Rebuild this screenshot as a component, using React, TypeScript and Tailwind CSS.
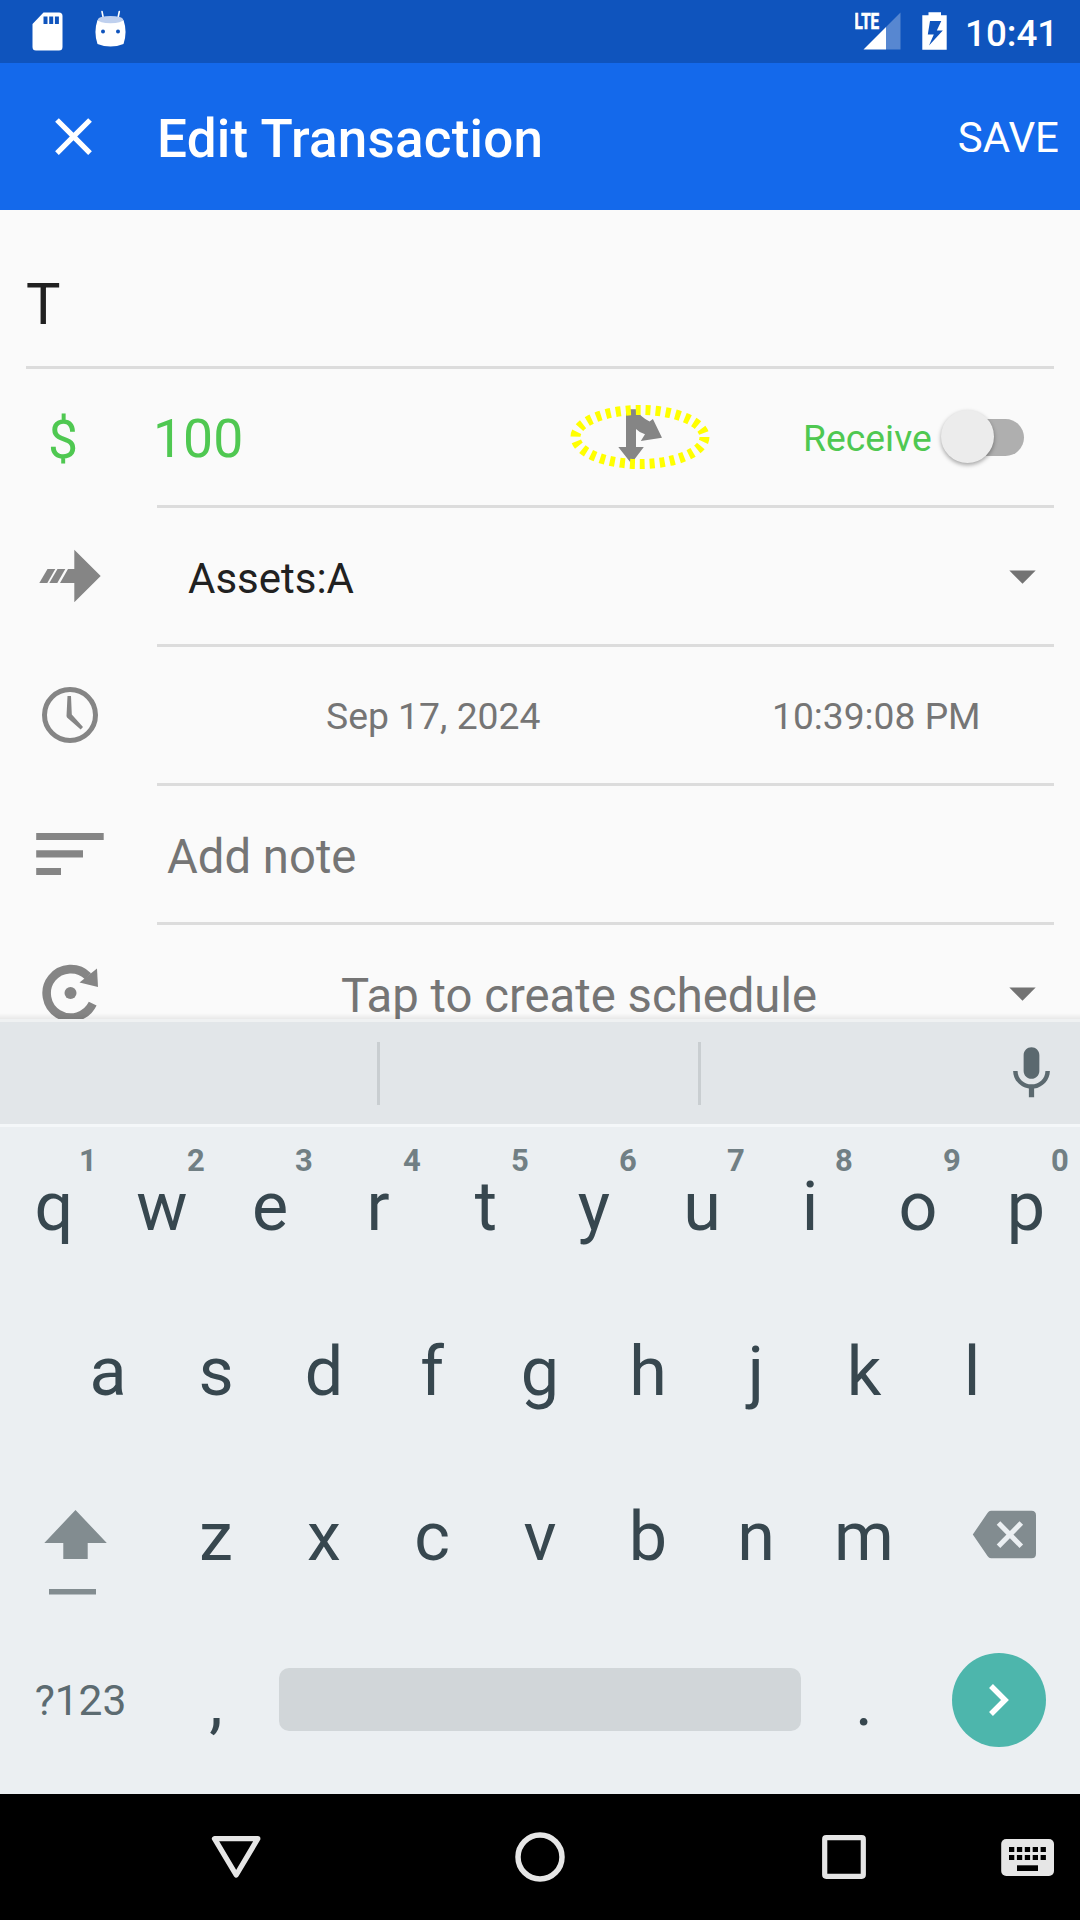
import type { ReactNode } from "react";

function SdCardIcon() {
  return (
    <svg className="ml-[32px] h-[63px] w-[31px]" viewBox="0 0 31 63">
      <path
        fillRule="evenodd"
        fill="#fff"
        d="M11.5 12.5H27a3.5 3.5 0 0 1 3.5 3.5v31a3.5 3.5 0 0 1-3.5 3.5H4A3.5 3.5 0 0 1 .5 47V24zM11.5 16.5v7.5h4v-7.5zM17.2 16.5v7.5h4v-7.5zM22.9 16.5v7.5h4v-7.5z"
      />
    </svg>
  );
}

function DroidIcon() {
  return (
    <svg className="ml-[32px] h-[63px] w-[32px]" viewBox="95 0 32 63">
      <path d="M102 11.5l1.6 8M119.3 11.5l-1.6 8" stroke="#fff" strokeWidth="1.6" strokeLinecap="round" />
      <path fill="#fff" d="M97.5 20Q110.500 25 123.500 20Q127.600 32 123.500 44Q110.500 49 97.500 44Q93.400 32 97.500 20z" />
      <ellipse cx="110.500" cy="19.600" rx="12.700" ry="3.700" fill="#bfd0ee" />
      <circle cx="103" cy="31.500" r="2" fill="#0f54bd" />
      <circle cx="118" cy="31.500" r="2" fill="#0f54bd" />
    </svg>
  );
}

function SignalIcon() {
  return (
    <svg className="h-[63px] w-[46px]" viewBox="855 0 46 63">
      <path fill="#fff" fillOpacity=".3" d="M886 27l14.500-14.500V49.500H886z" />
      <path fill="#fff" d="M863.500 49.500L886 27V49.500z" />
      <text
        x="854.600"
        y="29"
        fill="#fff"
        stroke="#fff"
        strokeWidth=".7"
        fontFamily="Roboto, sans-serif"
        fontWeight="700"
        fontSize="22"
        textLength="24.500"
        lengthAdjust="spacingAndGlyphs"
      >
        LTE
      </text>
    </svg>
  );
}

function BatteryIcon() {
  return (
    <svg className="ml-[21px] h-[63px] w-[25px]" viewBox="922 0 25 63">
      <path
        fill="#fff"
        fillRule="evenodd"
        d="M928.500 12.300h12.500V15.300h5.700V49.700H922.300V15.300h6.200zM930 21l-2.200 13.500h6L929 45.500 942.800 30.500h-6L941.300 21z"
      />
    </svg>
  );
}

function ArrowIcon() {
  return (
    <svg className="h-[136px] w-[157px]" viewBox="0 508 157 136" fill="#858585">
      <path d="M74.300 549.700L100.700 576 74.300 602.300V583H60l8-14h6.300z" />
      <path d="M47.500 569H55.300L47.300 583H39.300z" />
      <path d="M57.500 569H65.300L57.300 583H49.300z" />
    </svg>
  );
}

function ClockIcon() {
  return (
    <svg className="h-[136px] w-[157px]" viewBox="0 647 157 136">
      <circle cx="70" cy="715" r="25.500" fill="none" stroke="#858585" strokeWidth="5" />
      <path fill="#858585" d="M67.500 696H71L71.800 714.500 83 727 80.700 729.500 67 717.500 66.500 716z" />
    </svg>
  );
}

function NotesIcon() {
  return (
    <svg className="h-[136px] w-[157px]" viewBox="0 786 157 136" fill="#858585">
      <path d="M36.200 833H103.700V840H36.200zM36.200 850.300H83V857.600H36.200zM36.200 868H61V875H36.200z" />
    </svg>
  );
}

function RepeatIcon() {
  return (
    <svg className="h-[136px] w-[157px] shrink-0" viewBox="0 925 157 136">
      <path d="M92.700 1003.700A24.200 24.200 0 1 1 88 976.200" fill="none" stroke="#858585" strokeWidth="8.600" />
      <path fill="#858585" d="M97 968.500L98 987 79.500 982.500z" />
      <circle cx="70.500" cy="993" r="6" fill="#858585" />
    </svg>
  );
}

function SplitIcon() {
  return (
    <svg className="h-[136px] w-[140px]" viewBox="569.700 369 140 136">
      <path fill="#858585" d="M625.700 409.300H635.500Q640 417 649.300 421.500L652.600 419 661.700 437.700 640.500 441 644.700 434.300Q639 432.500 635.700 429V447H643.500L631 463.500 618 447H625.700z" />
      <ellipse cx="639.700" cy="437" rx="64.500" ry="27" fill="none" stroke="#ff0" strokeWidth="10" strokeDasharray="5 5" />
    </svg>
  );
}

function Caret() {
  return (
    <svg className="mt-[2px] h-[14px] w-[27px]" viewBox="0 0 27 14">
      <path fill="#737373" d="M.3.500H26.700L13.500 13.700z" />
    </svg>
  );
}

function Row({ icon, children }: { icon: ReactNode; children: ReactNode }) {
  return (
    <div className="flex h-[139px] shrink-0 pr-[26px]">
      <div className="w-[157px] shrink-0">{icon}</div>
      <div className="flex min-w-0 flex-1 items-center border-b-[3px] border-[#dcdcdc]">{children}</div>
    </div>
  );
}

function Key({ label, hint }: { label: string; hint?: string }) {
  return (
    <div className="relative h-[157px] w-[108px] text-center text-[68.25px] leading-[160px] text-[#37474f]">
      {label}
      {hint && (
        <span className="absolute top-[17px] right-[11px] w-[18px] text-center text-[31px] leading-[33px] font-bold text-[#717f84]">
          {hint}
        </span>
      )}
    </div>
  );
}

function ShiftIcon() {
  return (
    <svg className="h-[157px] w-[162px]" viewBox="0 1457 162 157" fill="#828c90">
      <path d="M75.500 1510L106.800 1543H87.700V1559H63.300V1543H44.300z" />
      <path d="M49 1589H96V1594.500H49z" />
    </svg>
  );
}

function BackspaceIcon() {
  return (
    <svg className="h-[157px] w-[162px]" viewBox="918 1457 162 157">
      <path fill="#828c90" d="M991 1510.700H1031.500Q1036 1510.700 1036 1515.200V1553.700Q1036 1558.200 1031.500 1558.200H991Q989 1558.200 987.500 1556L972.800 1534.500 987.500 1513Q989 1510.700 991 1510.700z" />
      <path d="M998.500 1523L1021.300 1546.200M1021.300 1523L998.500 1546.200" stroke="#ebeff2" strokeWidth="5" />
    </svg>
  );
}

const topRow = ["q", "w", "e", "r", "t", "y", "u", "i", "o", "p"];
const homeRow = ["a", "s", "d", "f", "g", "h", "j", "k", "l"];
const bottomRow = ["z", "x", "c", "v", "b", "n", "m"];

function Keyboard() {
  return (
    <div className="flex h-[667px] flex-col gap-2 bg-[#ebeff2]">
      <div className="flex">
        {topRow.map((k, i) => (
          <Key key={k} label={k} hint={String((i + 1) % 10)} />
        ))}
      </div>
      <div className="flex px-[54px]">
        {homeRow.map((k) => (
          <Key key={k} label={k} />
        ))}
      </div>
      <div className="flex">
        <ShiftIcon />
        {bottomRow.map((k) => (
          <Key key={k} label={k} />
        ))}
        <BackspaceIcon />
      </div>
      <div className="flex h-[157px] items-center">
        <div className="w-[162px] pr-[1px] text-center text-[42.5px] leading-[157px] text-[#5c6b71]">?123</div>
        <Key label="," />
        <div className="mx-[9px] mb-[2px] h-[63px] flex-1 rounded-[10px] bg-[#d1d6d9]" />
        <Key label="." />
        <div className="flex w-[162px] justify-center pb-[1px]">
          <div className="flex size-[94.5px] items-center justify-center rounded-full bg-[#4db6ac]">
            <svg className="mr-[1px] h-[32px] w-[20px]" viewBox="0 0 20 32">
              <path d="M2 2L16 16 2 30" fill="none" stroke="#fff" strokeWidth="5.500" />
            </svg>
          </div>
        </div>
      </div>
    </div>
  );
}

function NavBar() {
  return (
    <div className="flex h-[126px] bg-black">
      <svg className="ml-[184px] h-[126px] w-[104px]" viewBox="184 1794 104 126">
        <path d="M214.500 1838.700H257.800L236.200 1875z" fill="none" stroke="#e6e6e6" strokeWidth="5.300" strokeLinejoin="round" />
      </svg>
      <svg className="ml-[200px] h-[126px] w-[104px]" viewBox="488 1794 104 126">
        <circle cx="540" cy="1857" r="22" fill="none" stroke="#e6e6e6" strokeWidth="5.500" />
      </svg>
      <svg className="ml-[200px] h-[126px] w-[104px]" viewBox="792 1794 104 126">
        <rect x="824.700" y="1837.700" width="38.600" height="38.600" rx="1.500" fill="none" stroke="#e6e6e6" strokeWidth="5.200" />
      </svg>
      <svg className="ml-[80px] h-[126px] w-[104px]" viewBox="976 1794 104 126">
        <rect x="1001.200" y="1839" width="52.800" height="37" rx="5" fill="#e6e6e6" />
        <path
          stroke="#000"
          strokeWidth="5"
          strokeDasharray="5.300 2.600"
          d="M1009 1849.600H1046M1009 1857.600H1046"
        />
        <path fill="#000" d="M1017 1865.300H1038V1871H1017z" />
      </svg>
    </div>
  );
}

export default function App() {
  return (
    <div className="flex h-[1920px] w-[1080px] flex-col overflow-hidden bg-[#fafafa] font-[Roboto,sans-serif]">
      <div className="flex h-[63px] shrink-0 bg-[#0f54bd]">
        <SdCardIcon />
        <DroidIcon />
        <div className="ml-auto flex pr-[24px]">
          <SignalIcon />
          <BatteryIcon />
          <span className="ml-[18px] w-[91px] pt-[2px] text-right text-[36.75px] leading-[63px] font-medium whitespace-nowrap text-white">10:41</span>
        </div>
      </div>

      <div className="flex h-[147px] shrink-0 items-center bg-[#1469eb] text-white">
        <svg className="ml-[42px] size-[63px]" viewBox="0 0 24 24" fill="#fff">
          <path d="M19 6.410L17.590 5 12 10.590 6.410 5 5 6.410 10.590 12 5 17.590 6.410 19 12 13.410 17.590 19 19 17.590 13.410 12z" />
        </svg>
        <h1 className="ml-[52px] pt-[4px] text-[53px] leading-[60px] font-medium tracking-[0.2px]">Edit Transaction</h1>
        <span className="mr-[21px] ml-auto pt-[2px] text-[42px] leading-[50px]">SAVE</span>
      </div>

      <div className="flex h-[809px] shrink-0 flex-col overflow-hidden">
        <div className="mx-[26px] flex h-[159px] shrink-0 items-center border-b-[3px] border-[#dcdcdc] pt-[32px] text-[57.75px] leading-[68px] text-[#212121]">
          T
        </div>

        <Row icon={<div className="pt-[3px] pl-[48px] text-[53.5px] leading-[136px] text-[#4fc851]">$</div>}>
          <span className="-ml-[4px] w-[417px] pt-[4px] text-[53.5px] leading-[60px] text-[#4fc851]">100</span>
          <SplitIcon />
          <span className="ml-[93px] pt-[1px] text-[37.3px] leading-[44px] text-[#4fc851]">Receive</span>
          <div className="relative mr-[30px] ml-auto h-[37px] w-[73px] rounded-full bg-[#afafaf]">
            <div className="absolute -top-[9px] -left-[10px] size-[53px] rounded-full bg-[#ececec] shadow-[0_2px_4px_rgba(0,0,0,0.35)]" />
          </div>
        </Row>

        <Row icon={<ArrowIcon />}>
          <span className="flex-1 pt-[5px] pl-[31px] text-[42px] leading-[50px] text-[#212121]">Assets:A</span>
          <div className="mr-[18px]">
            <Caret />
          </div>
        </Row>

        <Row icon={<ClockIcon />}>
          <span className="ml-[169px] w-[446px] pt-[1px] text-[37.3px] leading-[44px] text-[#757575]">Sep 17, 2024</span>
          <span className="pt-[1px] text-[37.2px] leading-[44px] text-[#757575]">10:39:08 PM</span>
        </Row>

        <Row icon={<NotesIcon />}>
          <span className="pt-[5px] pl-[10px] text-[47.25px] leading-[56px] text-[#757575]">Add note</span>
        </Row>

        <Row icon={<RepeatIcon />}>
          <span className="flex-1 pt-[5px] pr-[8px] text-center text-[47.25px] leading-[56px] text-[#757575]">Tap to create schedule</span>
          <div className="mr-[18px]">
            <Caret />
          </div>
        </Row>
      </div>

      <div className="relative h-[3px] shrink-0 bg-[#eff1f2]">
        <div className="absolute -top-[6px] left-0 h-[6px] w-full bg-linear-to-b from-black/0 to-black/7" />
      </div>
      <div className="flex h-[102px] shrink-0 items-center bg-[#e2e6e9]">
        <div className="ml-[377px] h-[63px] w-[3px] bg-[#c9ced1]" />
        <div className="ml-[318px] h-[63px] w-[3px] bg-[#c9ced1]" />
        <svg className="mr-[17px] ml-auto size-[63px]" viewBox="0 0 24 24" fill="#5b696f">
          <path d="M12 14c1.660 0 2.990-1.340 2.990-3L15 5c0-1.660-1.340-3-3-3S9 3.340 9 5v6c0 1.660 1.340 3 3 3zm5.300-3c0 3-2.540 5.100-5.300 5.100S6.700 14 6.700 11H5c0 3.410 2.720 6.230 6 6.720V21h2v-3.280c3.280-.48 6-3.300 6-6.720h-1.700z" />
        </svg>
      </div>
      <div className="h-[3px] shrink-0 bg-[#f4f7f9]" />
      <Keyboard />
      <NavBar />
    </div>
  );
}
